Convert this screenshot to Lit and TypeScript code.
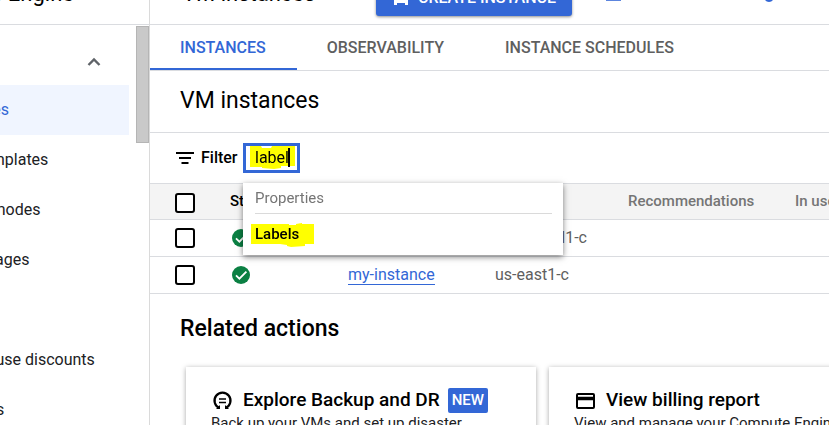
import { LitElement, html, css, svg } from "lit";
import { customElement, state } from "lit/decorators.js";

const NAV = [
  "VM instances",
  "Instance templates",
  "Sole-tenant nodes",
  "Machine images",
  "TPUs",
  "Committed use discounts",
  "Reservations",
];

const TABS = ["INSTANCES", "OBSERVABILITY", "INSTANCE SCHEDULES"];

const ROWS = [
  { name: "", zone: "us-central1-c" },
  { name: "my-instance", zone: "us-east1-c" },
];

const check = svg`<circle cx="9" cy="9" r="9" fill="#0b8043"/><path d="M4 9.3l3.4 3.4 7-7" fill="none" stroke="#fff" stroke-width="1.8"/>`;

@customElement("app-root")
export class AppRoot extends LitElement {
  @state() private tab = 0;
  @state() private query = "label";

  static styles = css`
    :host {
      display: block;
      height: 100vh;
      overflow: hidden;
      background: #fff;
      color: #000;
      font-family: Roboto, "Noto Sans", sans-serif;
      font-size: 16px;
      line-height: 20px;
    }
    * { box-sizing: border-box; }
    h1, h2, h3, p { margin: 0; font-weight: 400; }
    button, input { font: inherit; }
    .page {
      display: grid;
      grid-template-columns: 150px minmax(0, 1fr);
      grid-template-rows: 53px minmax(0, 1fr);
      height: calc(100vh + 28px);
      margin-top: -28px;
    }
    .product, .toolbar {
      display: flex;
      align-items: center;
      border-bottom: 1px solid #dadce0;
      overflow: hidden;
    }
    .product {
      justify-content: flex-end;
      padding: 0 75px 8px 0;
      border-right: 1px solid #dadada;
      white-space: nowrap;
      font-size: 22px;
    }
    .toolbar { padding-left: 32px; }
    .toolbar h1 { width: 194px; padding-bottom: 8px; font-size: 22px; }
    .create {
      display: flex;
      align-items: center;
      gap: 8px;
      height: 36px;
      padding: 0 16px;
      border: 0;
      border-radius: 3px;
      background: #3367d6;
      color: #fff;
      font-weight: 500;
      box-shadow: 0 1px 3px rgba(0, 0, 0, 0.45);
      white-space: nowrap;
    }
    .tools { display: flex; align-items: center; gap: 140px; padding-left: 34px; }
    .tools svg { display: block; }
    .side {
      display: flex;
      border-right: 1px solid #dadada;
      overflow: hidden;
    }
    .nav { flex: 1; min-width: 0; padding-right: 7px; }
    .group { display: flex; justify-content: flex-end; align-items: center; height: 60px; padding: 14px 28px 0 0; }
    .collapse { display: flex; padding: 0; border: 0; background: none; }
    .item {
      display: flex;
      align-items: center;
      height: 50px;
      color: #202124;
      text-decoration: none;
      white-space: nowrap;
    }
    .item span { margin-left: -88px; }
    .item.on { background: #f0f5ff; color: #3367d6; }
    .thumb { flex: none; width: 13px; height: 117px; margin: 1px 0 0; background: #c9c9c9; border: 1px solid #b5b5b5; }
    .main { overflow: hidden; }
    .tabs { display: flex; height: 46px; border-bottom: 1px solid #dadce0; }
    .tab {
      padding: 2px 31px 0 30px;
      border: 0;
      border-bottom: 2px solid transparent;
      background: none;
      color: #5f5f5f;
      font-weight: 500;
      white-space: nowrap;
    }
    .tab.on { color: #3367d6; border-color: #3367d6; }
    .title { padding: 16px 30px 17px; border-bottom: 1px solid #dadce0; font-size: 23px; line-height: 28px; }
    .filter { display: flex; align-items: center; height: 50px; padding-left: 26px; }
    .filter label { width: 42px; margin-left: 7px; font-weight: 500; }
    .field { position: relative; z-index: 2; }
    .field input {
      display: block;
      width: 57px;
      height: 30px;
      padding: 0 0 2px 9px;
      border: 3px solid #3367d6;
      outline: 0;
      background: #fff;
      color: #000;
    }
    .mark { position: absolute; mix-blend-mode: multiply; pointer-events: none; }
    .mark-field { left: 7px; top: 2px; }
    .caret { position: absolute; left: 45px; top: 5px; width: 2px; height: 19px; background: #000; }
    .menu {
      position: absolute;
      left: 0;
      top: 40px;
      width: 320px;
      height: 72px;
      padding: 5px 11px 0 12px;
      background: #fff;
      box-shadow: 0 2px 6px rgba(0, 0, 0, 0.5);
      font-size: 15px;
    }
    .kind { height: 26px; border-bottom: 1px solid #dadada; color: #757575; }
    .option {
      position: relative;
      display: block;
      height: 40px;
      padding: 0;
      border: 0;
      background: none;
      color: #000;
      font-weight: 500;
    }
    .mark-option { left: -4px; top: 9px; }
    table { width: 800px; border-collapse: collapse; table-layout: fixed; border-top: 1px solid #dadce0; }
    th, td { height: 37px; padding: 0; border-bottom: 1px solid #dadce0; text-align: left; white-space: nowrap; color: #5f5f5f; font-weight: 400; }
    th { height: 36px; padding-bottom: 2px; background: #f4f4f4; color: #757575; font-size: 15px; font-weight: 500; }
    th.sorted { color: #000; }
    td.pick, th.pick { padding: 0 0 0 25px; }
    th.pick { padding-top: 2px; }
    .pick input {
      display: block;
      appearance: none;
      width: 20px;
      height: 20px;
      margin: 0;
      border: 2px solid #000;
      border-radius: 3px;
      background: #fff;
    }
    .status { display: block; margin-left: 2px; }
    td a { color: #3367d6; text-decoration: none; border-bottom: 1px solid #3367d6; }
    .related { padding: 21px 30px 24px; font-size: 23px; line-height: 28px; font-weight: 500; }
    .cards { display: flex; gap: 13px; padding-left: 36px; }
    .card { flex: none; width: 350px; height: 150px; padding: 21px 0 0 25px; box-shadow: 0 1px 5px rgba(0, 0, 0, 0.35); }
    .head { display: flex; align-items: center; height: 25px; }
    .head svg { flex: none; margin-right: 9px; }
    .head h3 { padding-bottom: 2px; font-size: 19px; font-weight: 500; }
    .badge { margin-left: 8px; padding: 0 4px; border-radius: 2px; background: #3367d6; color: #fff; font-size: 15px; line-height: 25px; font-weight: 500; }
    .card p { white-space: nowrap; color: #202124; font-size: 15px; }
  `;

  render() {
    return html`
      <div class="page">
        <div class="product">Compute Engine</div>
        <header class="toolbar">
          <h1>VM instances</h1>
          <button class="create">
            <svg width="18" height="18" viewBox="0 0 18 18"><path d="M2 0h14v16H2z" fill="#fff"/><path d="M5 16v-2h8v2z" fill="#3367d6"/></svg>
            CREATE INSTANCE
          </button>
          <div class="tools">
            <svg width="15" height="6" viewBox="0 0 15 6"><path d="M0 0h15v6H0z" fill="#5c85de"/></svg>
            <svg width="16" height="8" viewBox="0 0 16 8"><path d="M2 0h12q-1 8-6 8t-6-8z" fill="#3367d6"/></svg>
          </div>
        </header>
        <aside class="side">
          <nav class="nav">
            <div class="group">
              <button class="collapse" aria-label="Collapse section">
                <svg width="14" height="10" viewBox="0 0 14 10"><path d="M1.5 8L7 2.5 12.5 8" fill="none" stroke="#5f6368" stroke-width="2.4"/></svg>
              </button>
            </div>
            ${NAV.map((n, i) => html`<a href="#" class="item ${i === 0 ? "on" : ""}"><span>${n}</span></a>`)}
          </nav>
          <div class="thumb"></div>
        </aside>
        <main class="main">
          <div class="tabs" role="tablist">
            ${TABS.map(
              (t, i) => html`<button role="tab" class="tab ${i === this.tab ? "on" : ""}" @click=${() => (this.tab = i)}>${t}</button>`
            )}
          </div>
          <h2 class="title">VM instances</h2>
          <div class="filter">
            <svg width="18" height="12" viewBox="0 0 18 12"><path d="M0 1h18M3 6h12M5.5 11h7" stroke="#000" stroke-width="2"/></svg>
            <label for="q">Filter</label>
            <div class="field">
              <input id="q" .value=${this.query} @input=${(e: Event) => (this.query = (e.target as HTMLInputElement).value)} />
              <svg class="mark mark-field" width="46" height="25" viewBox="0 0 46 25"><path d="M0 1h11l1 2h9l1-2h23v20H31v2l-7 1-12-1v-1H0z" fill="#ff0"/></svg>
              <span class="caret"></span>
              <div class="menu">
                <div class="kind">Properties</div>
                <button class="option">
                  Labels
                  <svg class="mark mark-option" width="64" height="24" viewBox="0 0 64 24"><path d="M0 1h38v1h7V1l6-1v1h12v20H54v2l-14 1-4-1v-1l-7-1H0z" fill="#ff0"/></svg>
                </button>
              </div>
            </div>
          </div>
          <table>
            <colgroup>
              <col width="80" /><col width="118" /><col width="147" /><col width="133" /><col width="167" /><col />
            </colgroup>
            <thead>
              <tr>
                <th class="pick"><input type="checkbox" aria-label="Select all" /></th>
                <th class="sorted">Status</th>
                <th>Name</th>
                <th>Zone</th>
                <th>Recommendations</th>
                <th>In use by</th>
              </tr>
            </thead>
            <tbody>
              ${ROWS.map(
                (r) => html`<tr>
                  <td class="pick"><input type="checkbox" aria-label="Select row" /></td>
                  <td><svg class="status" width="18" height="18" viewBox="0 0 18 18">${check}</svg></td>
                  <td>${r.name ? html`<a href="#">${r.name}</a>` : ""}</td>
                  <td>${r.zone}</td>
                  <td></td>
                  <td></td>
                </tr>`
              )}
            </tbody>
          </table>
          <h2 class="related">Related actions</h2>
          <div class="cards">
            <section class="card">
              <div class="head">
                <svg width="23" height="20" viewBox="0 0 23 20"><path d="M8.5 17A8 8 0 1 1 14.5 17" fill="none" stroke="#000" stroke-width="2.2"/><path d="M5 18h4v-4zM18 18h-4v-4z" fill="#000"/><path d="M8 8h7M8 11.5h7" stroke="#000" stroke-width="1.5"/></svg>
                <h3>Explore Backup and DR</h3>
                <span class="badge">NEW</span>
              </div>
              <p>Back up your VMs and set up disaster</p>
            </section>
            <section class="card">
              <div class="head">
                <svg width="23" height="16" viewBox="0 0 23 16"><rect x="3" y="1" width="17" height="14" rx="1" fill="none" stroke="#000" stroke-width="2"/><path d="M3 5.5h17" stroke="#000" stroke-width="3.5"/></svg>
                <h3>View billing report</h3>
              </div>
              <p>View and manage your Compute Engine</p>
            </section>
          </div>
        </main>
      </div>
    `;
  }
}
